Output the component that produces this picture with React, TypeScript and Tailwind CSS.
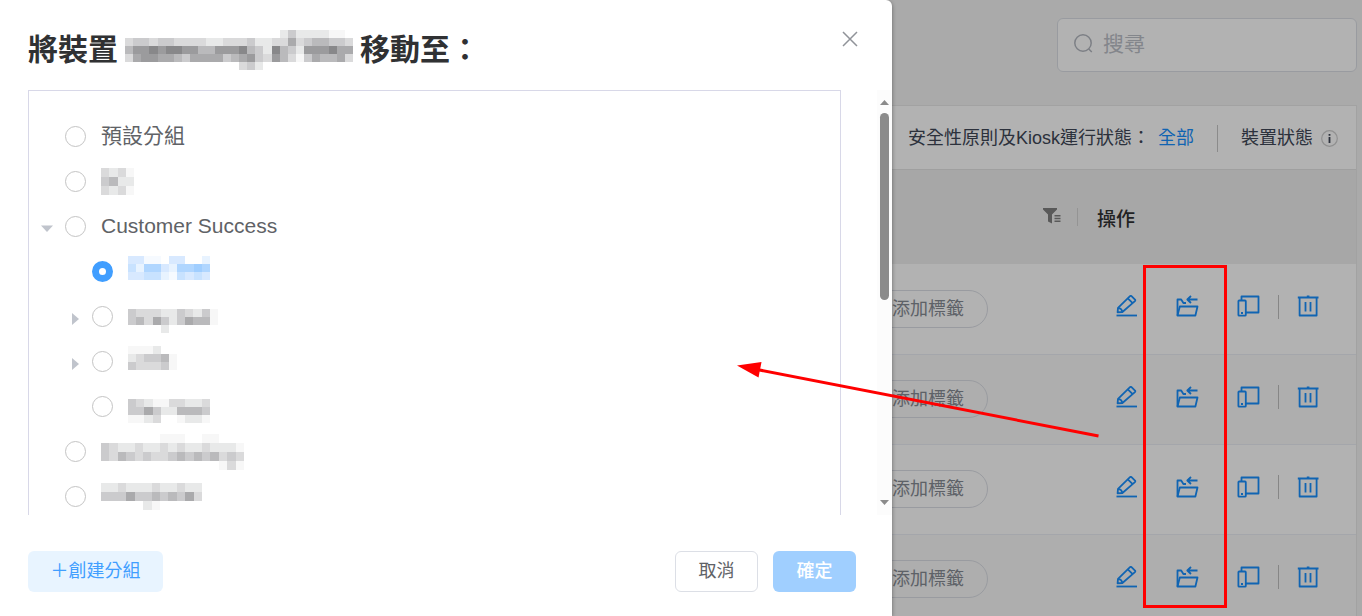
import React, { useState } from "react";

type Tone = "gray" | "blue";

type Group = {
  id: string;
  name: string;
  mosaic?: string[];
  mosaicClass?: string;
  tone?: Tone;
  level: number;
  arrow?: "open" | "closed";
};

const GRAY_TONES: Record<string, string> = {
  "8": "#88888a",
  "9": "#9b9b9d",
  a: "#aaaaac",
  b: "#bababc",
  c: "#cbcbcd",
  d: "#dadadb",
  e: "#e8e9e9",
  f: "#f7f7f7",
};

const BLUE_TONES: Record<string, string> = {
  a: "#a0ceff",
  b: "#b0d6ff",
  c: "#c8e2ff",
  d: "#d8e9ff",
  e: "#e8f3ff",
  f: "#f6faff",
};

// Pixelated placeholder for private names, one tone letter per cell
const Mosaic: React.FC<{ rows: string[]; className: string; tone?: Tone }> = ({ rows, className, tone = "gray" }) => {
  const tones = tone === "blue" ? BLUE_TONES : GRAY_TONES;

  return (
    <svg
      className={className}
      viewBox={`0 0 ${rows[0].length} ${rows.length}`}
      preserveAspectRatio="none"
      shapeRendering="crispEdges"
      aria-hidden="true"
    >
      {rows.map((row, y) =>
        row.split("").map((c, x) =>
          c === "." ? null : <rect key={`${x}-${y}`} x={x} y={y} width="1" height="1" fill={tones[c]} />
        )
      )}
    </svg>
  );
};

const titleMosaic = [
  "...................eceeeeff.",
  "dccdccddddeedddceeddadcbbccd",
  "b99898899bb9998bce8bce9998aa",
  "da99aabcaaaacba9cd9bdfcabbad",
  "..............dce...........",
];

const groups: Group[] = [
  { id: "default", name: "預設分組", level: 0 },
  { id: "g2", name: "", level: 0, mosaic: ["dedf", "cbee", "dedf"], mosaicClass: "w-[33px] h-[27px]" },
  { id: "cs", name: "Customer Success", level: 0, arrow: "open" },
  {
    id: "g4",
    name: "",
    level: 1,
    tone: "blue",
    mosaic: ["ddff.dd..e", "cebbdebbab", "ddccefcdcd", ".........."],
    mosaicClass: "w-[82px] h-[32px]",
  },
  {
    id: "g5",
    name: "",
    level: 1,
    arrow: "closed",
    mosaic: ["...........", "cdddeecdecf", "cbdacecabbf", "....e......"],
    mosaicClass: "w-[90px] h-[32px]",
  },
  {
    id: "g6",
    name: "",
    level: 1,
    arrow: "closed",
    mosaic: ["fffe..", "edccbf", "cdddcf", "......"],
    mosaicClass: "w-[49px] h-[32px]",
  },
  {
    id: "g7",
    name: "",
    level: 1,
    mosaic: ["..........", "cdeffddeed", "ccaceebbbc", "ffed..feef"],
    mosaicClass: "w-[82px] h-[32px]",
  },
  {
    id: "g8",
    name: "",
    level: 0,
    mosaic: [".......fff..ff...", "cdeedeededeedeeef", "cdbcdcddcbcbcbdcd", "..............fdf"],
    mosaicClass: "w-[143px] h-[36px]",
  },
  {
    id: "g9",
    name: "",
    level: 0,
    mosaic: ["eedeeedeedee", "cccaccbcbcad", ".....ef....."],
    mosaicClass: "w-[101px] h-[27px]",
  },
];

const EditIcon = () => (
  <svg className="w-[23px] h-[23px]" viewBox="0 0 23 23" fill="none" stroke="currentColor" strokeWidth="1.8" strokeLinejoin="round">
    <path d="M1.5 20.5H22" />
    <path d="M2.6 17.4L3 12.8L15 1.2Q15.8 .5 16.5 1.2L20 4.7Q20.6 5.4 19.9 6.1L7.4 17Z" />
    <path d="M3 12.8Q6.8 13.4 7.4 17M12.8 3.4L17.7 8.2" />
  </svg>
);

const MoveIcon = () => (
  <svg className="w-[23px] h-[23px]" viewBox="0 0 23 23" fill="none" stroke="currentColor" strokeWidth="1.8" strokeLinejoin="round">
    <path d="M1.5 20.5V4.5H5.2L7.4 8H10" />
    <path d="M3.8 11.5H21.5L19.4 20.5H1.5Z" />
    <path d="M11.5 4.5H21.5M15 1L11.3 4.5L15 8" />
  </svg>
);

const DevicesIcon = () => (
  <svg className="w-[23px] h-[23px]" viewBox="0 0 23 23" fill="none" stroke="currentColor" strokeWidth="1.8" strokeLinejoin="round">
    <path d="M4.5 5.5V1.5H21.5V17.5H9" />
    <rect x="1.4" y="5.5" width="7.4" height="15.2" rx="0.8" />
    <rect x="4" y="17" width="2" height="2" fill="currentColor" stroke="none" />
  </svg>
);

const TrashIcon = () => (
  <svg className="w-[23px] h-[23px]" viewBox="0 0 23 23" fill="none" stroke="currentColor" strokeWidth="1.8" strokeLinejoin="round">
    <path d="M0.8 2.5H21.5M9.8 1.3H12.4" />
    <path d="M2.6 2.5V20.5H19.6V2.5M8.5 7V16.5M13.5 7V16.5" />
  </svg>
);

const actionButtons = [
  { label: "編輯", Icon: EditIcon },
  { label: "移動", Icon: MoveIcon },
  { label: "裝置", Icon: DevicesIcon },
];

const DeviceRow: React.FC = () => (
  <tr className="h-[90px] border-b border-[#ebeef5] odd:bg-white even:bg-[#f9f9f9]">
    <td>
      <div className="flex justify-end pr-[90px]">
        <button className="h-[38px] px-[23px] rounded-full border border-[#dcdfe6] text-[18px] leading-[34px] text-[#868b94] whitespace-nowrap">
          添加標籤
        </button>
      </div>
    </td>
    <td>
      <div className="flex items-center pl-[37px] pb-1 text-[#1890ff]">
        <div className="flex gap-[38px]">
          {actionButtons.map(({ label, Icon }) => (
            <button key={label} aria-label={label}>
              <Icon />
            </button>
          ))}
        </div>
        <span className="w-px h-6 mx-[18px] bg-[#c0c0c0]" />
        <button aria-label="刪除">
          <TrashIcon />
        </button>
      </div>
    </td>
  </tr>
);

const DevicePage: React.FC = () => (
  <div className="h-full bg-[#f4f4f4] pr-[5px] pt-[18px]">
    <div className="flex justify-end">
      <label className="flex items-center w-[300px] h-[54px] pb-0.5 px-[15px] gap-2.5 rounded-md border border-[#dcdfe6] bg-white text-[#b4b8c0]">
        <svg className="w-5 h-5 shrink-0" viewBox="0 0 20 20" fill="none" stroke="currentColor" strokeWidth="1.5">
          <circle cx="10" cy="9" r="8.2" />
          <path d="M15.8 15L18.8 18" />
        </svg>
        <input
          type="text"
          aria-label="搜尋"
          placeholder="搜尋"
          className="w-full bg-transparent outline-none text-[21px] leading-[30px] placeholder:text-[#bcc0c8]"
        />
      </label>
    </div>

    <div className="mt-[33px] border border-[#e8e8e8] bg-white">
      <div className="flex items-center justify-end h-[64px] pt-0.5 pr-[18px] border-b border-[#e4e4e4] text-[18px] text-[#404756] whitespace-nowrap">
        <span>安全性原則及Kiosk運行狀態：</span>
        <a href="#" className="ml-2 text-[#1890ff]">全部</a>
        <span className="w-px h-[27px] mx-[23px] bg-[#c8c8c8]" />
        <span>裝置狀態</span>
        <svg className="ml-2 w-[17px] h-[17px]" viewBox="0 0 17 17">
          <circle cx="8.5" cy="8.5" r="7.8" fill="none" stroke="#cfcfcf" strokeWidth="1.2" />
          <path d="M7.6 7H9.4V13H7.6ZM7.6 4H9.4V5.8H7.6Z" fill="#404756" />
        </svg>
      </div>

      <table className="w-full table-fixed border-collapse">
        <colgroup>
          <col />
          <col className="w-[278px]" />
        </colgroup>
        <thead>
          <tr className="h-[94px] bg-[#f0f0f0]">
            <th>
              <div className="flex items-center justify-end gap-4">
                <svg className="w-[18px] h-[18px]" viewBox="0 0 18 18" fill="#808080">
                  <path d="M0 0H14V1.5L9 6.5V15.5L5 13.5V6.5L0 1.5Z" />
                  <path d="M11.5 7H17.5V8.5H11.5ZM11.5 9.8H17.5V11.3H11.5ZM11.5 12.6H17.5V14.1H11.5Z" />
                </svg>
                <span className="w-px h-[18px] bg-[#d4d4d4]" />
              </div>
            </th>
            <th className="pl-[19px] pt-1.5 text-left text-[19px] font-medium text-[#303133]">操作</th>
          </tr>
        </thead>
        <tbody>
          <DeviceRow />
          <DeviceRow />
          <DeviceRow />
          <DeviceRow />
        </tbody>
      </table>
    </div>
  </div>
);

const GroupRow: React.FC<{ group: Group; checked: boolean; onSelect: (id: string) => void }> = ({ group, checked, onSelect }) => (
  <li className={`flex items-center h-[45px] ${group.level === 1 ? "pl-[39px]" : "pl-3"}`}>
    <span className="w-6 pt-1 shrink-0">
      {group.arrow && (
        <button aria-label="展開" className="block w-3 h-3">
          <svg className="w-3 h-3" viewBox="0 0 12 12" fill="#c0c4cc">
            <path d={group.arrow === "open" ? "M0 2.5H12L6 9Z" : "M4 0V12L11 6Z"} />
          </svg>
        </button>
      )}
    </span>
    <label className="flex items-center gap-[15px] cursor-pointer">
      <input
        type="radio"
        name="group"
        checked={checked}
        onChange={() => onSelect(group.id)}
        className="appearance-none w-[21px] h-[21px] rounded-full bg-white border border-[#c4c4c4] checked:border-[7px] checked:border-[#409eff]"
      />
      {group.mosaic ? (
        <Mosaic rows={group.mosaic} tone={group.tone} className={group.mosaicClass || ""} />
      ) : (
        <span className="pb-0.5 text-[21px] leading-[30px] text-[#606266]">{group.name}</span>
      )}
    </label>
  </li>
);

const MoveDialog: React.FC = () => {
  const [selected, setSelected] = useState("g4");

  return (
    <div
      role="dialog"
      className="absolute inset-y-0 left-0 right-[470px] flex flex-col bg-white rounded-tr-md shadow-[0_1px_4px_rgba(0,0,0,0.4)]"
    >
      <div className="flex items-start justify-between h-[90px] pl-7 pr-[31px] shrink-0">
        <h2 className="flex items-center h-[40px] mt-[30px] text-[30px] leading-[40px] font-bold text-[#303133] whitespace-nowrap">
          將裝置
          <Mosaic rows={titleMosaic} className="w-[228px] h-[40px] mx-[7px]" />
          移動至：
        </h2>
        <button aria-label="關閉" className="mt-7 p-0.5">
          <svg className="w-[18px] h-[18px]" viewBox="0 0 18 18" stroke="#909399" strokeWidth="1.5">
            <path d="M2 2L16 16M16 2L2 16" />
          </svg>
        </button>
      </div>

      <div className="flex flex-1 min-h-0 overflow-hidden">
        <ul className="flex-1 self-start ml-7 mr-9 pt-[23px] pb-6 border border-[#d8d8e8]">
          {groups.map((group) => (
            <GroupRow key={group.id} group={group} checked={selected === group.id} onSelect={setSelected} />
          ))}
        </ul>
        {/* Scrollbar */}
        <div className="flex flex-col items-center w-[15px] py-2 bg-[#fcfcfc]">
          <svg className="w-[9px] h-[9px]" viewBox="0 0 9 9" fill="#8b8b8b">
            <path d="M4.5 2L9 7H0Z" />
          </svg>
          <div className="w-[9px] h-[187px] mt-1.5 mb-auto rounded-full bg-[#8b8b8b]" />
          <svg className="w-[9px] h-[9px]" viewBox="0 0 9 9" fill="#8b8b8b">
            <path d="M4.5 7L9 2H0Z" />
          </svg>
        </div>
      </div>

      <div className="flex items-start justify-between h-[101px] pt-9 pl-7 pr-9 shrink-0 text-[18px]">
        <button className="w-[135px] h-[41px] rounded-md bg-[#e8f4ff] text-[#409eff]">＋創建分組</button>
        <div className="flex gap-[15px]">
          <button className="w-[83px] h-[41px] rounded-md border border-[#dcdfe6] text-[#606266]">取消</button>
          <button className="w-[83px] h-[41px] rounded-md bg-[#a0cfff] text-white font-medium">確定</button>
        </div>
      </div>
    </div>
  );
};

const App: React.FC = () => (
  <div className="relative h-screen overflow-hidden font-['Liberation_Sans','Noto_Sans_CJK_TC',sans-serif]">
    <DevicePage />
    <div className="absolute inset-0 bg-black/30" />
    <MoveDialog />

    {/* Annotations */}
    <div className="absolute top-[265px] right-[135px] w-[84px] h-[343px] border-[3px] border-[#ff0000] pointer-events-none" />
    <svg className="absolute top-[360px] right-[263px] w-[362px] h-[80px] pointer-events-none" viewBox="0 0 362 80">
      <path d="M20 9.5L361.5 76" stroke="#ff0000" strokeWidth="3" />
      <path d="M0 5.5L24.5 2L21.5 17.5Z" fill="#ff0000" />
    </svg>
  </div>
);

export default App;
